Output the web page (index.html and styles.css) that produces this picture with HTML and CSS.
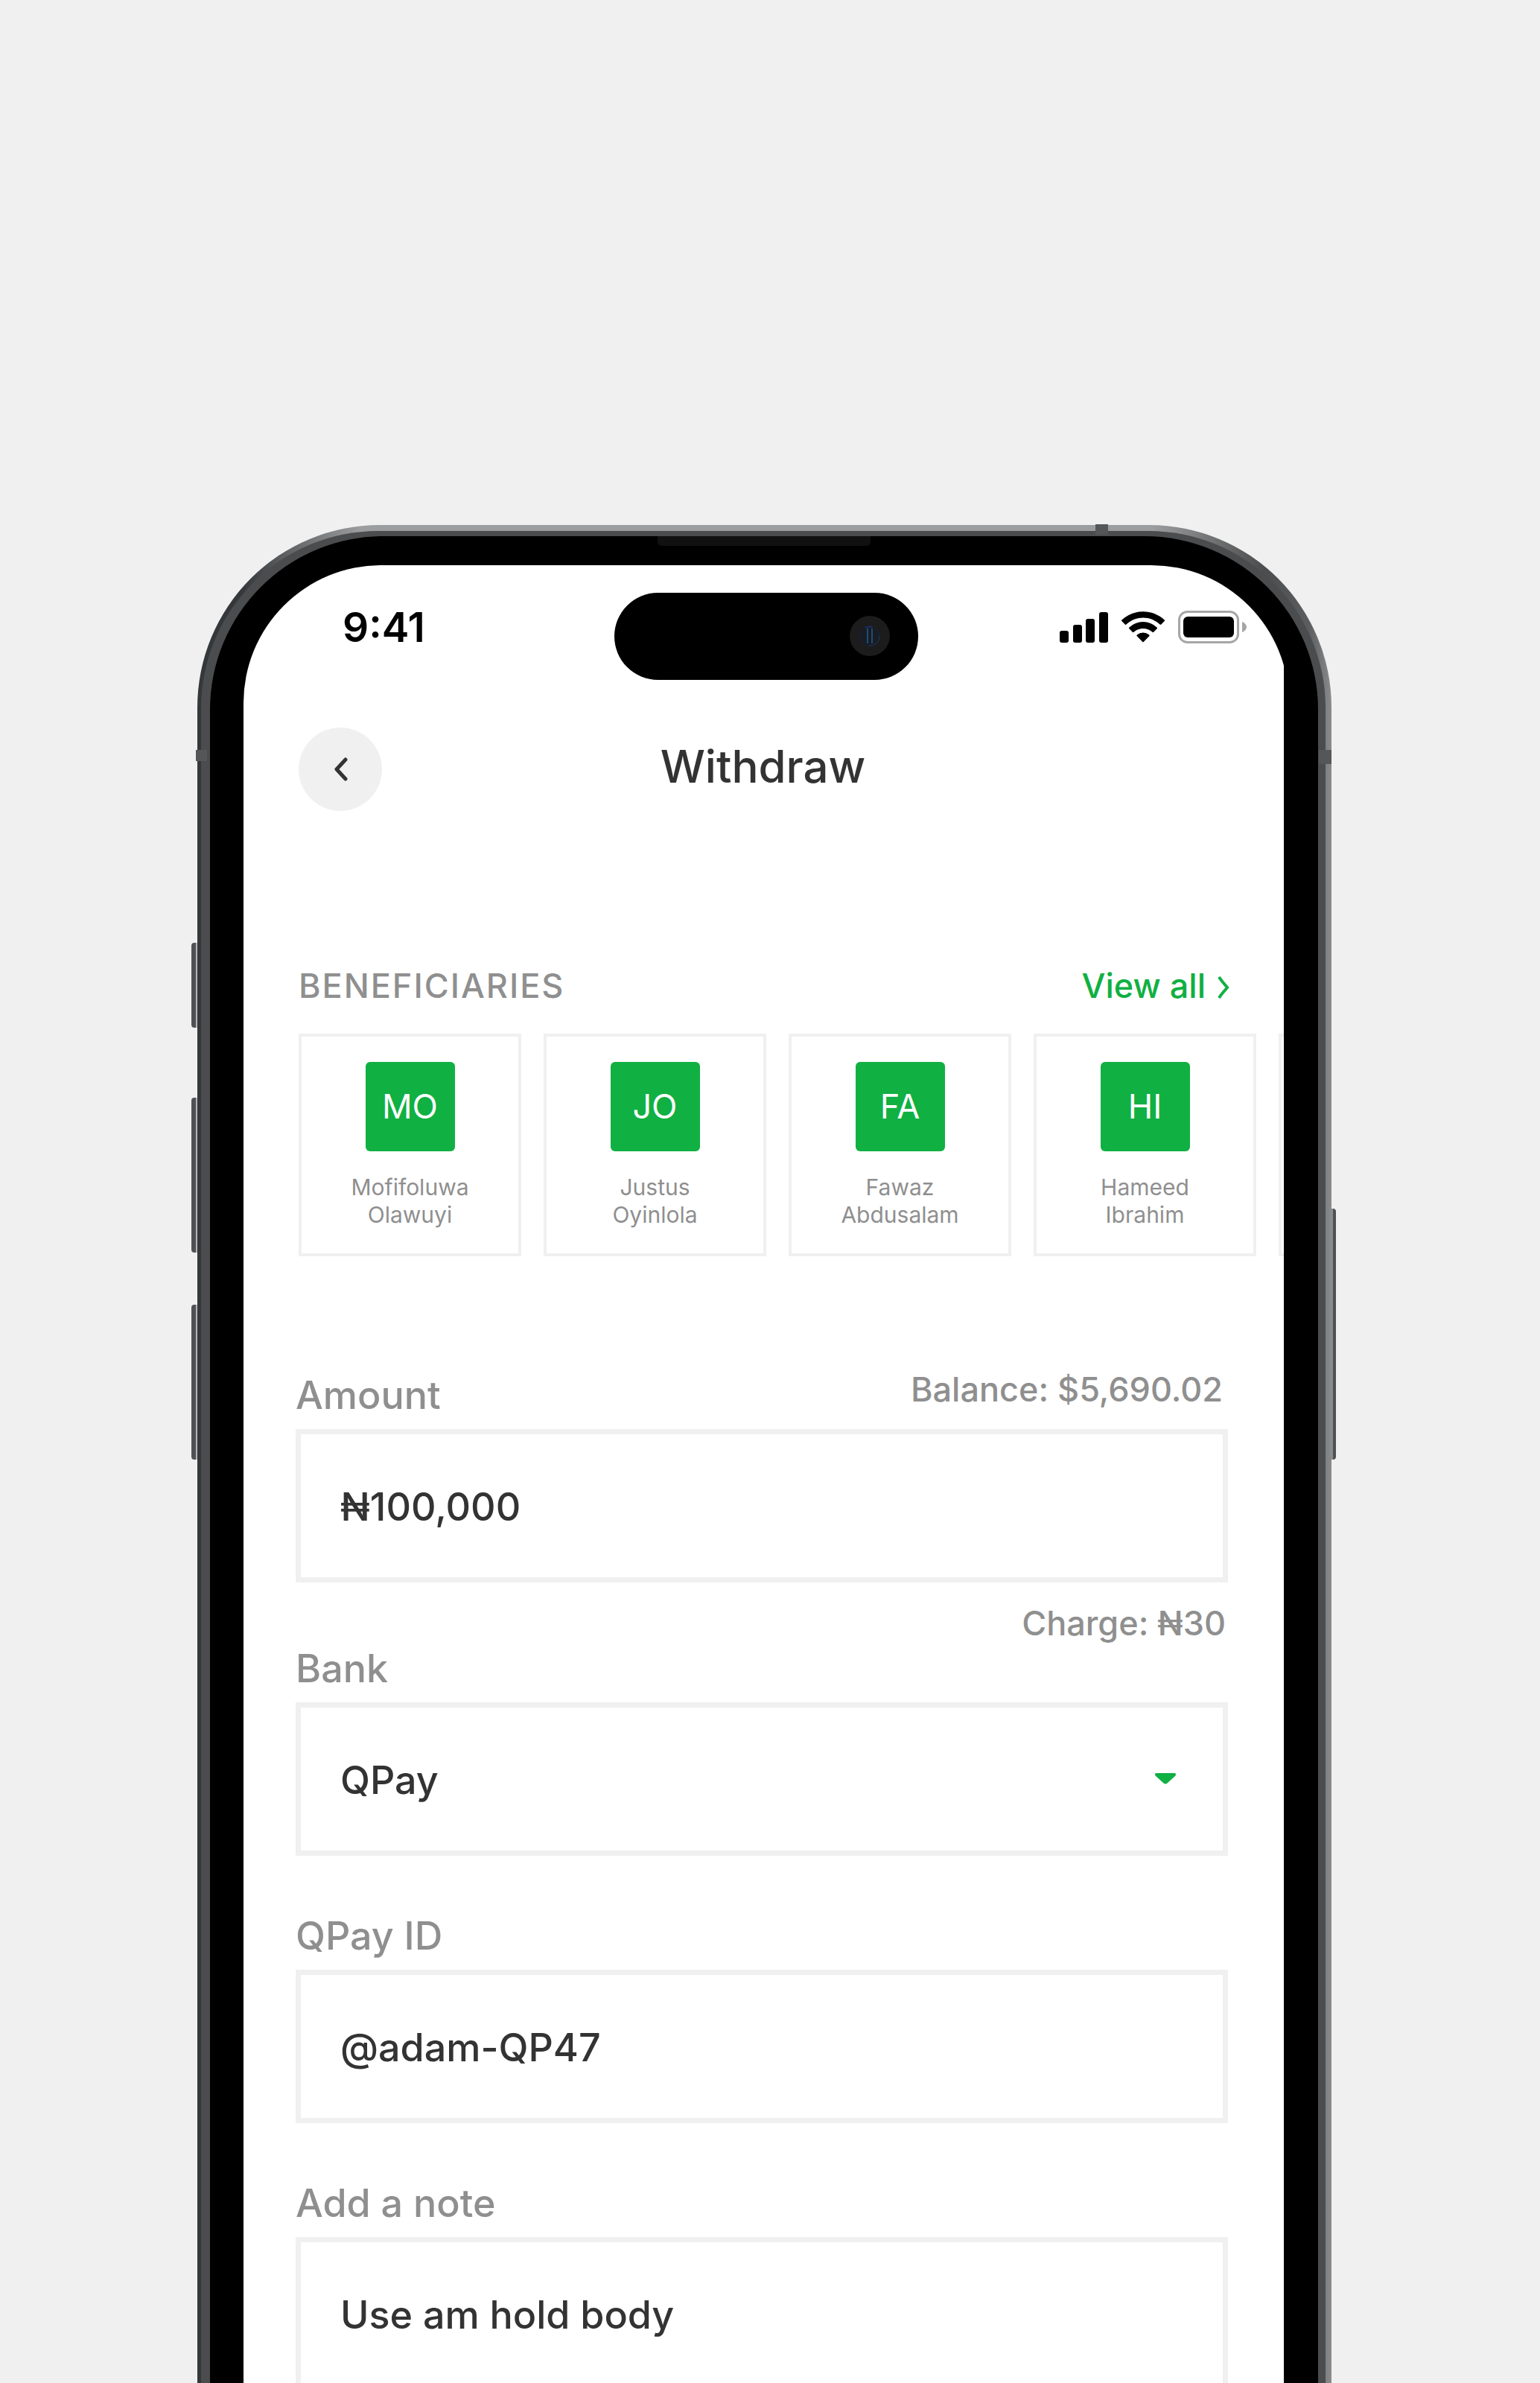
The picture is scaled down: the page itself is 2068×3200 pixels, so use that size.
FILE: index.html
```html
<!DOCTYPE html>
<html lang="en">
<head>
<meta charset="utf-8">
<meta name="viewport" content="width=device-width, initial-scale=1">
<title>Withdraw</title>
<link rel="stylesheet" href="styles.css">
</head>
<body>
<div class="stage">
  <div class="phone">
    <span class="key key-action"></span>
    <span class="key key-up"></span>
    <span class="key key-down"></span>
    <span class="key key-power"></span>
    <div class="rim">
      <div class="bezel">
        <span class="speaker"></span>
        <main class="screen">
          <div class="island">
            <svg class="camera" viewBox="0 0 54 54" aria-hidden="true">
              <circle cx="27" cy="27" r="27" fill="#1c1c1c"/>
              <circle cx="27" cy="27" r="13" fill="#181c24" stroke="#1b2c50" stroke-width="1" stroke-dasharray="2 2"/>
              <path d="M24 17v20M30 17v20" stroke="#1f4c72" stroke-width="2" fill="none"/>
              <path d="M40 27a13 13 0 0 1-15 13" stroke="#1c3a58" stroke-width="1" fill="none"/>
              <path d="M21 16a13 13 0 0 1 9-1" stroke="#1c2f6a" stroke-width="2" fill="none"/>
            </svg>
          </div>
          <div class="status">
            <span class="time">9:41</span>
            <div class="status-icons">
              <svg class="signal" viewBox="0 0 65 41" aria-hidden="true">
                <rect x="0" y="25" width="12" height="16" rx="3"/>
                <rect x="18" y="17" width="12" height="24" rx="3"/>
                <rect x="35" y="9" width="12" height="32" rx="3"/>
                <rect x="53" y="0" width="12" height="41" rx="3"/>
              </svg>
              <svg class="wifi" viewBox="0 0 17.14 12.3" aria-hidden="true">
                <path d="M8.571 2.466c2.486 0 4.877.956 6.679 2.668a.36.36 0 0 0 .502-.005l1.296-1.31a.35.35 0 0 0-.003-.507c-4.736-4.417-12.212-4.417-16.948 0a.35.35 0 0 0-.003.507l1.297 1.31c.138.14.363.142.502.005A9.7 9.7 0 0 1 8.571 2.466z"/>
                <path d="M8.567 6.727c1.366 0 2.683.508 3.695 1.425a.36.36 0 0 0 .5-.01l1.296-1.328a.36.36 0 0 0-.005-.51 7.97 7.97 0 0 0-10.969 0 .36.36 0 0 0-.005.51l1.295 1.328a.36.36 0 0 0 .5.01 5.5 5.5 0 0 1 3.693-1.425z"/>
                <path d="M11.104 9.542a.35.35 0 0 1-.104.257l-2.241 2.272a.27.27 0 0 1-.377 0L6.141 9.799a.35.35 0 0 1 .011-.52 3.73 3.73 0 0 1 4.84 0 .37.37 0 0 1 .112.263z"/>
              </svg>
              <svg class="battery" viewBox="0 0 92 44" aria-hidden="true">
                <rect x="1.5" y="1.5" width="79" height="41" rx="11" fill="none" stroke="#a6a6a6" stroke-width="3"/>
                <rect x="7" y="8" width="68" height="28" rx="6"/>
                <path d="M86 15c3 1 6 4 6 7s-3 6-6 7z" fill="#a6a6a6"/>
              </svg>
            </div>
          </div>

          <header class="topbar">
            <button class="back" type="button" aria-label="Back">
              <svg viewBox="0 0 20 32" aria-hidden="true"><path d="M17 3 5 16l12 13"/></svg>
            </button>
            <h1 class="title">Withdraw</h1>
          </header>

          <section class="people">
            <div class="people-head">
              <h2 class="people-title">BENEFICIARIES</h2>
              <a class="view-all" href="#">View all
                <svg viewBox="0 0 16 32" aria-hidden="true"><path d="M2 2c3 5 7 9 11 14-4 5-8 9-11 14"/></svg>
              </a>
            </div>
            <ul class="cards">
              <li class="card"><span class="avatar">MO</span><span class="name">Mofifoluwa<br>Olawuyi</span></li>
              <li class="card"><span class="avatar">JO</span><span class="name">Justus<br>Oyinlola</span></li>
              <li class="card"><span class="avatar">FA</span><span class="name">Fawaz<br>Abdusalam</span></li>
              <li class="card"><span class="avatar">HI</span><span class="name">Hameed<br>Ibrahim</span></li>
              <li class="card"></li>
            </ul>
          </section>

          <form class="form">
            <div class="field">
              <div class="field-head">
                <label class="label" for="amount">Amount</label>
                <span class="hint">Balance: $5,690.02</span>
              </div>
              <input class="box" id="amount" type="text" value="₦100,000">
              <p class="hint charge">Charge: ₦30</p>
            </div>
            <div class="field">
              <label class="label" for="bank">Bank</label>
              <div class="select">
                <select class="box" id="bank"><option>QPay</option></select>
                <svg class="caret" viewBox="0 0 28 15" aria-hidden="true"><path d="M1 0h26q2 2 0 4L17 13q-3 3-6 0L1 4q-2-2 0-4z"/></svg>
              </div>
            </div>
            <div class="field">
              <label class="label" for="qpay-id">QPay ID</label>
              <input class="box" id="qpay-id" type="text" value="@adam-QP47">
            </div>
            <div class="field">
              <label class="label" for="note">Add a note</label>
              <input class="box" id="note" type="text" value="Use am hold body">
            </div>
          </form>
        </main>
      </div>
    </div>
    <span class="band band-top"></span>
    <span class="band band-left"></span>
    <span class="band band-right"></span>
  </div>
</div>
</body>
</html>
```

FILE: styles.css
```css
* {
  box-sizing: border-box;
}

body {
  margin: 0;
  background: #f0f0f0;
  color: #333;
  font-family: Inter, "Liberation Sans", sans-serif;
}

h1,
h2,
p,
ul {
  margin: 0;
  padding: 0;
}

.stage {
  height: 100vh;
  padding: 705px 280px 0 265px;
  overflow: hidden;
}

/* Device shell: metal edge, inner rim, black bezel, screen */
.phone {
  position: relative;
  min-height: 100%;
  padding: 8px 8px 0 5px;
  border-radius: 245px 245px 0 0;
  background: linear-gradient(to right, #34383b 0, #34383b 60px, #5f6163 120px, #9b9d9e 220px, #9b9d9e calc(100% - 240px), #4c4d4f calc(100% - 90px), #5c5d5f calc(100% - 30px), #7e7f81 calc(100% - 8px), #8a8b8d 100%);
}

.rim {
  padding: 7px 10px 0 12px;
  border-radius: 238px 238px 0 0;
  background: #4b4c4e;
}

.bezel {
  position: relative;
  padding: 39px 39px 0 45px;
  border-radius: 233px 233px 0 0;
  background: #000;
}

.speaker {
  position: absolute;
  top: 0;
  left: 50%;
  width: 286px;
  height: 13px;
  margin-left: -143px;
  border-radius: 0 0 6px 6px;
  background: #111;
}

.key {
  position: absolute;
  left: -8px;
  width: 8px;
  border-right: 2px solid #b4b6b7;
  border-radius: 4px 0 0 4px;
  background: #505152;
}

.key-action {
  top: 561px;
  height: 114px;
}

.key-up {
  top: 769px;
  height: 208px;
}

.key-down {
  top: 1047px;
  height: 208px;
}

.key-power {
  top: 918px;
  right: -6px;
  left: auto;
  width: 6px;
  height: 337px;
  border-right: 0;
  border-left: 2px solid #8a8b8d;
  border-radius: 0 4px 4px 0;
}

.band {
  position: absolute;
  background: #555657;
}

.band-top {
  top: -1px;
  right: 300px;
  width: 17px;
  height: 14px;
}

.band-left {
  top: 302px;
  left: -2px;
  width: 15px;
  height: 15px;
}

.band-right {
  top: 302px;
  right: 0;
  width: 17px;
  height: 19px;
}

.screen {
  position: relative;
  padding: 50px 0 0;
  border-radius: 185px 185px 0 0;
  background: #fff;
  clip-path: inset(0 7px 0 0);
}

/* Status bar */
.island {
  position: absolute;
  top: 37px;
  left: 50%;
  width: 408px;
  height: 117px;
  margin-left: -204px;
  border-radius: 59px;
  background: #000;
}

.camera {
  position: absolute;
  top: 31px;
  right: 38px;
  width: 54px;
  height: 54px;
}

.status {
  display: flex;
  align-items: center;
  justify-content: space-between;
  height: 66px;
  padding: 0 57px 0 133px;
}

.time {
  color: #000;
  font-size: 55px;
  font-weight: 600;
  line-height: 66px;
}

.status-icons {
  display: flex;
  align-items: center;
  gap: 18px;
}

.signal {
  width: 65px;
  height: 41px;
}

.wifi {
  width: 58px;
  height: 42px;
}

.battery {
  width: 92px;
  height: 44px;
}

/* Title bar */
.topbar {
  display: grid;
  grid-template-columns: 112px 1fr 112px;
  align-items: start;
  margin-top: 102px;
  padding: 0 83px 0 74px;
}

.back {
  display: flex;
  align-items: center;
  justify-content: center;
  width: 112px;
  height: 112px;
  padding: 0;
  border: 0;
  border-radius: 50%;
  background: #f0f0f0;
}

.back svg {
  width: 20px;
  height: 32px;
  fill: none;
  stroke: #333;
  stroke-width: 5;
  stroke-linecap: round;
  stroke-linejoin: round;
}

.title {
  font-size: 60px;
  font-weight: 500;
  line-height: 104px;
  text-align: center;
}

/* Beneficiaries */
.people {
  margin-top: 207px;
  padding-left: 74px;
}

.people-head {
  display: flex;
  align-items: center;
  justify-content: space-between;
  padding-right: 80px;
  line-height: 56px;
}

.people-title {
  color: #8f8f8f;
  font-size: 45px;
  font-weight: 500;
  letter-spacing: 2px;
}

.view-all {
  display: flex;
  align-items: center;
  gap: 16px;
  color: #10b042;
  font-size: 45px;
  font-weight: 500;
  text-decoration: none;
}

.view-all svg {
  width: 16px;
  height: 32px;
  margin-top: 4px;
  fill: none;
  stroke: #10b042;
  stroke-width: 4;
}

.cards {
  display: flex;
  gap: 30px;
  margin-top: 36px;
  overflow: hidden;
  list-style: none;
}

.card {
  display: flex;
  flex: none;
  flex-direction: column;
  align-items: center;
  gap: 30px;
  width: 299px;
  height: 299px;
  padding-top: 34px;
  border: 4px solid #f0f0f0;
}

.avatar {
  width: 120px;
  border-radius: 6px;
  background: #10b042;
  color: #fff;
  font-size: 45px;
  line-height: 120px;
  text-align: center;
}

.name {
  color: #8f8f8f;
  font-size: 30px;
  line-height: 37px;
  text-align: center;
}

/* Form */
.form {
  display: grid;
  gap: 76px;
  margin-top: 155px;
  padding: 0 82px 76px 70px;
}

.field {
  display: flex;
  flex-direction: column;
  gap: 13px;
}

.field:first-child {
  margin-bottom: -71px;
}

.field-head {
  display: flex;
  align-items: flex-start;
  justify-content: space-between;
  padding-right: 7px;
}

.label {
  color: #8f8f8f;
  font-size: 52px;
  font-weight: 500;
  line-height: 64px;
}

.hint {
  color: #8f8f8f;
  font-size: 45px;
  font-weight: 500;
  line-height: 48px;
}

.charge {
  margin-top: 18px;
  padding-right: 3px;
  text-align: right;
}

.box {
  width: 100%;
  height: 206px;
  padding: 3px 53px 0;
  border: 7px solid #f0f0f0;
  border-radius: 0;
  outline: 0;
  appearance: none;
  background: #fff;
  color: #333;
  font: 500 52px/64px Inter, "Liberation Sans", sans-serif;
}

.select {
  position: relative;
}

.select .box {
  display: block;
}

.caret {
  position: absolute;
  top: 95px;
  right: 70px;
  width: 28px;
  height: 15px;
  fill: #10b042;
  pointer-events: none;
}
```
